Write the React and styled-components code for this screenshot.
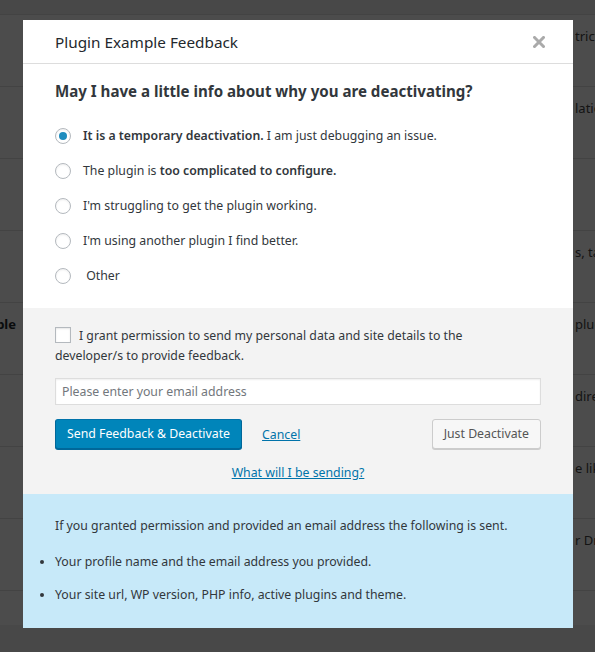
import { createGlobalStyle, styled } from "styled-components";

const GlobalStyle = createGlobalStyle`
  html, body {
    margin: 0;
    padding: 0;
    background: #f1f1f1;
    font-family: "Noto Sans", "Open Sans", sans-serif;
    color: #444;
  }
  * { box-sizing: border-box; }
`;

const Page = styled.div`
  position: relative;
  width: 595px;
  height: 652px;
  overflow: hidden;
  background: #f1f1f1;
`;

const PluginTable = styled.div`
  padding-top: 14px;
  display: flex;
  flex-direction: column;
`;

const PluginRow = styled.div`
  display: grid;
  grid-template-columns: 16px 1fr;
  column-gap: 559px;
  height: ${({ $h }) => $h || 72}px;
  background: #fff;
  border-top: 1px solid #e1e1e1;
  padding-top: 12px;
  font-size: 13px;
  color: #444;
`;

const PluginName = styled.div`
  display: flex;
  justify-content: flex-end;
  overflow: hidden;
  white-space: nowrap;
  font-weight: 700;
  color: #23282d;
`;

const PluginDesc = styled.div`
  white-space: nowrap;
  overflow: hidden;
`;

const Overlay = styled.div`
  position: absolute;
  inset: 0;
  background: rgba(0, 0, 0, 0.7);
`;

const Modal = styled.div`
  position: absolute;
  left: 23px;
  top: 20px;
  width: 550px;
  background: #fff;
  display: flex;
  flex-direction: column;
  font-size: 12.3px;
`;

const Header = styled.div`
  height: 44px;
  border-bottom: 1px solid #ddd;
  display: flex;
  align-items: center;
  justify-content: space-between;
  padding: 0 28px 0 32px;
`;

const Title = styled.h2`
  margin: 0;
  font-size: 15.3px;
  font-weight: 400;
  color: #23282d;
`;

const CloseButton = styled.button`
  border: 0;
  background: none;
  padding: 0;
  width: 12px;
  height: 12px;
  display: flex;
  cursor: pointer;
`;

const Body = styled.div`
  padding: 16px 32px 15px;
`;

const Question = styled.h3`
  margin: 0 0 16px;
  font-size: 15.1px;
  line-height: 22px;
  font-weight: 700;
  color: #32373c;
`;

const Reasons = styled.div`
  display: flex;
  flex-direction: column;
`;

const ReasonLabel = styled.label`
  height: 35px;
  display: flex;
  align-items: center;
  gap: 12px;
  color: #32373c;
  cursor: pointer;

  b { font-weight: 600; }
`;

const Radio = styled.input.attrs({ type: "radio", name: "reason" })`
  appearance: none;
  margin: 0;
  width: 16px;
  height: 16px;
  border-radius: 50%;
  border: 1px solid #b4b9be;
  background: #fff;
  box-shadow: inset 0 1px 2px rgba(0, 0, 0, 0.07);
  display: grid;
  place-items: center;
  flex-shrink: 0;

  &:checked::before {
    content: "";
    width: 8px;
    height: 8px;
    border-radius: 50%;
    background: #1e8cbe;
  }
`;

const Permission = styled.div`
  background: #f3f3f3;
  padding: 18px 32px 11px;
  display: flex;
  flex-direction: column;
`;

const ConsentText = styled.label`
  max-width: 440px;
  line-height: 20px;
  color: #32373c;
`;

const Checkbox = styled.input.attrs({ type: "checkbox" })`
  appearance: none;
  margin: 0 8px 0 0;
  width: 16px;
  height: 16px;
  border: 1px solid #b4b9be;
  background: #fff;
  box-shadow: inset 0 1px 2px rgba(0, 0, 0, 0.1);
  vertical-align: -3px;
`;

const EmailInput = styled.input`
  margin-top: 12px;
  width: 486px;
  height: 27px;
  border: 1px solid #ddd;
  box-shadow: inset 0 1px 2px rgba(0, 0, 0, 0.07);
  background: #fff;
  padding: 0 6px;
  font: inherit;
  color: #32373c;

  &::placeholder { color: #72777c; }
`;

const Actions = styled.div`
  margin-top: 14px;
  display: flex;
  align-items: center;
  gap: 20px;
  width: 486px;
`;

const Button = styled.button`
  height: 30px;
  padding: 0 11px 2px;
  border-radius: 3px;
  font: inherit;
  cursor: pointer;
  border: 1px solid;
  border-color: ${({ $primary }) => ($primary ? "#0073aa #006799 #006799" : "#ccc")};
  background: ${({ $primary }) => ($primary ? "#0085ba" : "#f7f7f7")};
  color: ${({ $primary }) => ($primary ? "#fff" : "#555")};
  box-shadow: 0 1px 0 ${({ $primary }) => ($primary ? "#006799" : "#ccc")};
  margin-left: ${({ $push }) => ($push ? "auto" : "0")};
`;

const Link = styled.a`
  color: #0073aa;
  text-decoration: underline;
  cursor: pointer;
`;

const SendingLink = styled(Link)`
  margin-top: 14px;
  align-self: center;
  line-height: 20px;
`;

const Info = styled.div`
  background: #c7e9f9;
  padding: 22px 32px 23px;
  line-height: 20px;
  color: #32373c;

  p { margin: 0; }
`;

const InfoList = styled.ul`
  margin: 16px 0 0;
  padding: 0;
  list-style: disc outside;
  display: flex;
  flex-direction: column;
  gap: 13px;
`;

const CloseIcon = () => (
  <svg width="12" height="12" viewBox="0 0 12 12">
    <path d="M1.5 1.5 L10.5 10.5 M10.5 1.5 L1.5 10.5" stroke="#aaa" strokeWidth="3" strokeLinecap="square" />
  </svg>
);

const rows = [
  { name: "", desc: "tricted access to content" },
  { name: "", desc: "lation ready" },
  { name: "", desc: "" },
  { name: "", desc: "s, tags and pages" },
  { name: "Plugin Example", desc: "plugin" },
  { name: "", desc: "directory" },
  { name: "", desc: "e like" },
  { name: "", desc: "r Drafts" },
  { name: "", desc: "", h: 35 },
];

const reasons = [
  <><b>It is a temporary deactivation.</b> I am just debugging an issue.</>,
  <>The plugin is <b>too complicated to configure.</b></>,
  <>I'm struggling to get the plugin working.</>,
  <>I'm using another plugin I find better.</>,
  <>&nbsp;Other</>,
];

export default function App() {
  return (
    <Page>
      <GlobalStyle />
      <PluginTable>
        {rows.map((row, i) => (
          <PluginRow key={i} $h={row.h}>
            <PluginName><span>{row.name}</span></PluginName>
            <PluginDesc>{row.desc}</PluginDesc>
          </PluginRow>
        ))}
      </PluginTable>
      <Overlay />

      <Modal>
        <Header>
          <Title>Plugin Example Feedback</Title>
          <CloseButton aria-label="Close"><CloseIcon /></CloseButton>
        </Header>

        <Body>
          <Question>May I have a little info about why you are deactivating?</Question>
          <Reasons>
            {reasons.map((text, i) => (
              <ReasonLabel key={i}>
                <Radio defaultChecked={i === 0} />
                <span>{text}</span>
              </ReasonLabel>
            ))}
          </Reasons>
        </Body>

        <Permission>
          <ConsentText>
            <Checkbox />
            I grant permission to send my personal data and site details to the developer/s to provide feedback.
          </ConsentText>
          <EmailInput placeholder="Please enter your email address" />
          <Actions>
            <Button $primary>Send Feedback &amp; Deactivate</Button>
            <Link>Cancel</Link>
            <Button $push>Just Deactivate</Button>
          </Actions>
          <SendingLink>What will I be sending?</SendingLink>
        </Permission>

        <Info>
          <p>If you granted permission and provided an email address the following is sent.</p>
          <InfoList>
            <li>Your profile name and the email address you provided.</li>
            <li>Your site url, WP version, PHP info, active plugins and theme.</li>
          </InfoList>
        </Info>
      </Modal>
    </Page>
  );
}
